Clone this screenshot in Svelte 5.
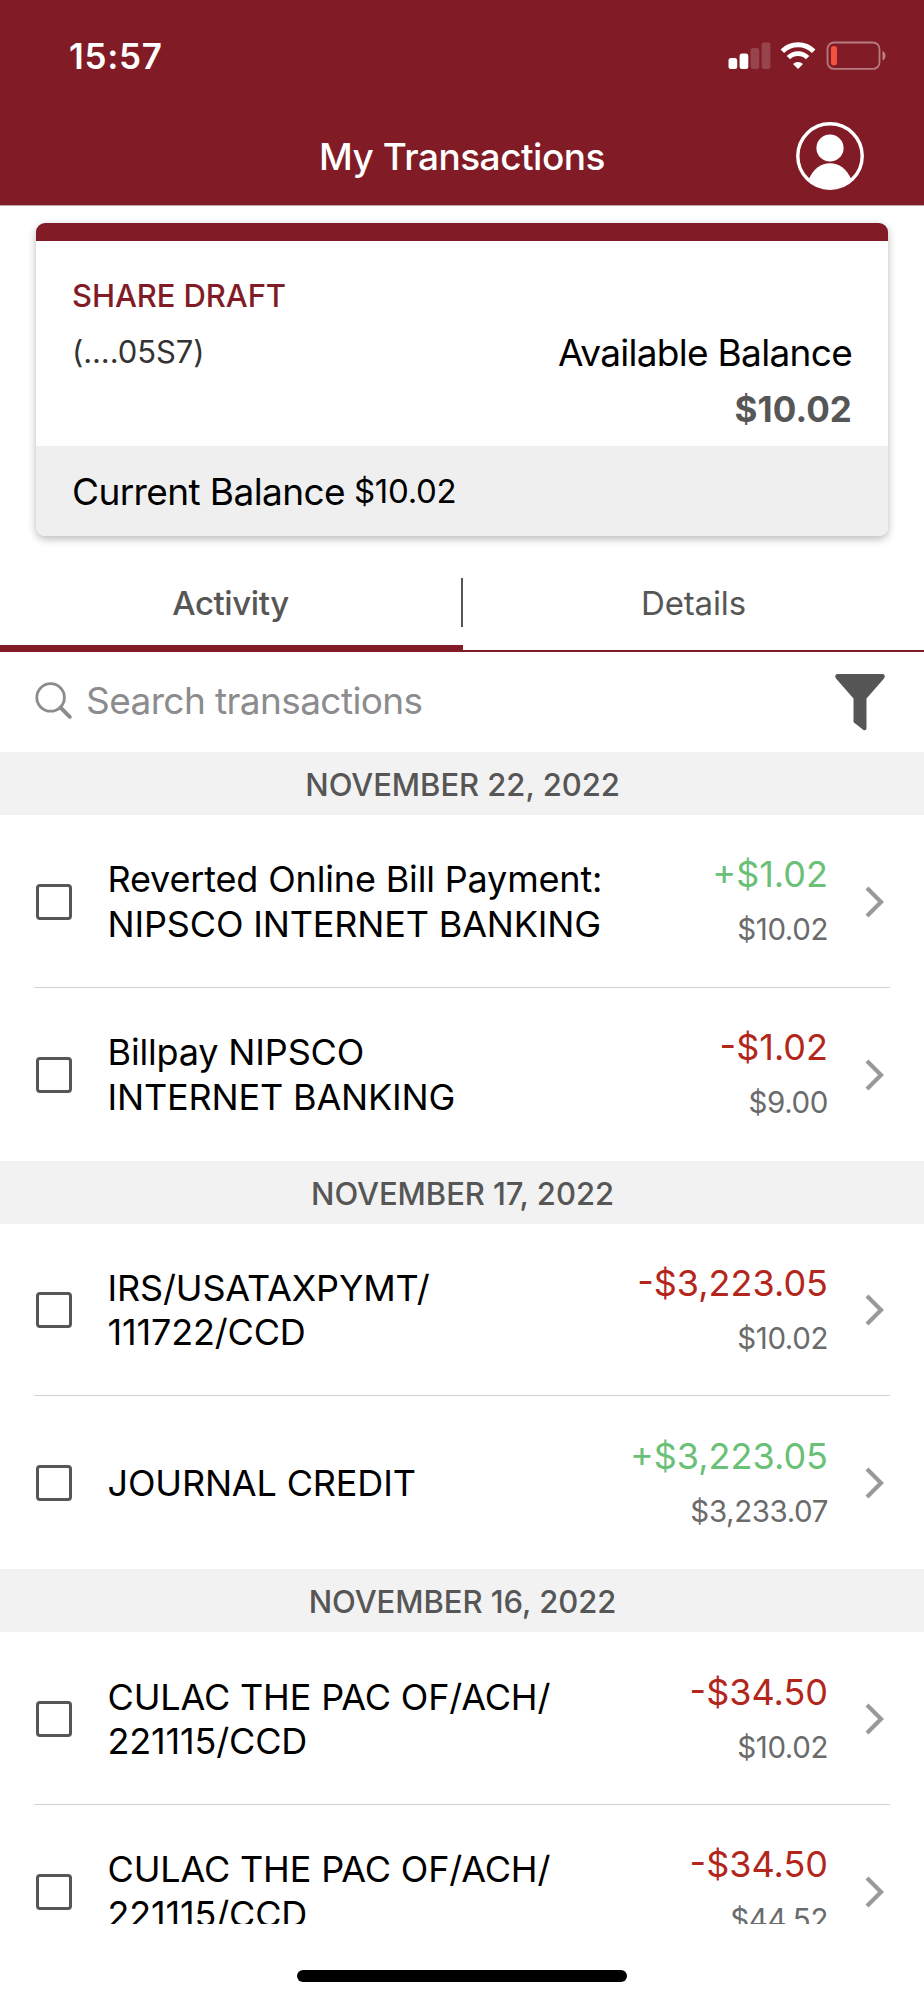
<script lang="ts">
  type Transaction = { lines: string[]; amount: string; balance: string };
  type Day = { date: string; items: Transaction[] };

  const tabs = ["Activity", "Details"];
  let activeTab = $state("Activity");

  const days: Day[] = [
    {
      date: "November 22, 2022",
      items: [
        { lines: ["Reverted Online Bill Payment:", "NIPSCO INTERNET BANKING"], amount: "+$1.02", balance: "$10.02" },
        { lines: ["Billpay NIPSCO", "INTERNET BANKING"], amount: "-$1.02", balance: "$9.00" },
      ],
    },
    {
      date: "November 17, 2022",
      items: [
        { lines: ["IRS/USATAXPYMT/", "111722/CCD"], amount: "-$3,223.05", balance: "$10.02" },
        { lines: ["JOURNAL CREDIT"], amount: "+$3,223.05", balance: "$3,233.07" },
      ],
    },
    {
      date: "November 16, 2022",
      items: [
        { lines: ["CULAC THE PAC OF/ACH/", "221115/CCD"], amount: "-$34.50", balance: "$10.02" },
        { lines: ["CULAC THE PAC OF/ACH/", "221115/CCD"], amount: "-$34.50", balance: "$44.52" },
      ],
    },
  ];
</script>

<div class="screen">
  <header>
    <div class="status-bar">
      <span class="time">15:57</span>
      <svg class="status-icons" width="160" height="30" viewBox="0 0 160 30">
        <rect x="0.5" y="17" width="8.7" height="11" rx="2.5" fill="#fff" />
        <rect x="11.6" y="12.5" width="8.7" height="15.5" rx="2.5" fill="#fff" />
        <rect x="22.6" y="7" width="8.7" height="21" rx="2.5" fill="#fff" opacity="0.18" />
        <rect x="33.7" y="1.5" width="8.7" height="26.5" rx="2.5" fill="#fff" opacity="0.18" />
        <g fill="none" stroke="#fff">
          <path d="M54.3 10.2a22.3 22.3 0 0 1 31.4 0" stroke-width="5" />
          <path d="M60.4 16.6a13.6 13.6 0 0 1 19.2 0" stroke-width="4.8" />
        </g>
        <path d="M70 28l-5-5a7.2 7.2 0 0 1 10 0z" fill="#fff" />
        <rect x="99.5" y="1.5" width="52" height="26.4" rx="6.5" fill="none" stroke="#fff" stroke-opacity="0.42" stroke-width="1.8" />
        <rect x="103" y="5" width="6" height="19.3" rx="2.6" fill="#f4503c" />
        <path d="M154.5 10c4 1.6 4 8 0 9.6z" fill="#fff" opacity="0.45" />
      </svg>
    </div>
    <div class="nav">
      <h1>My Transactions</h1>
      <button class="profile" aria-label="Profile">
        <svg width="68" height="68" viewBox="0 0 68 68">
          <circle cx="34" cy="34" r="32.2" fill="none" stroke="#fff" stroke-width="3.4" />
          <circle cx="34" cy="26" r="13.6" fill="#fff" />
          <path d="M12.8 57C17.5 47 25 41.3 34 41.3S50.5 47 55.2 57C49.5 63 42.5 66.5 34 66.5S18.5 63 12.8 57z" fill="#fff" />
        </svg>
      </button>
    </div>
  </header>

  <section class="card">
    <div class="card-body">
      <div class="account">
        <div class="account-name">SHARE DRAFT</div>
        <div class="account-number">(....05S7)</div>
      </div>
      <div class="available">
        <div class="available-label">Available Balance</div>
        <div class="available-value">$10.02</div>
      </div>
    </div>
    <div class="card-footer">
      <span class="current-label">Current Balance</span>
      <span class="current-value">$10.02</span>
    </div>
  </section>

  <nav class="tabs">
    {#each tabs as tab}
      <button class="tab" class:active={activeTab === tab} onclick={() => (activeTab = tab)}>
        <span>{tab}</span>
      </button>
    {/each}
  </nav>

  <div class="search">
    <svg class="search-icon" width="38" height="38" viewBox="0 0 38 38" fill="none" stroke="#8c8c8e">
      <circle cx="15.6" cy="15.4" r="13.8" stroke-width="2.8" />
      <path d="M25.6 25.6l9.2 9.2" stroke-width="4" stroke-linecap="round" />
    </svg>
    <span class="placeholder">Search transactions</span>
    <svg class="filter-icon" width="50" height="57" viewBox="0 0 50 57">
      <path
        d="M2 0H48Q51 1.5 49 4.5L31.5 24.5V54.5Q31 57 28.5 56L19.5 49Q18.5 48.5 18.5 47.5V24.5L1 4.5Q-1 1.5 2 0z"
        fill="#565656"
      />
    </svg>
  </div>

  <main>
    {#each days as day}
      <h2>{day.date}</h2>
      {#each day.items as item}
        <div class="row">
          <span class="checkbox"></span>
          <div class="description">
            {#each item.lines as line}
              <div>{line}</div>
            {/each}
          </div>
          <div class="amounts">
            <div class="amount" class:credit={item.amount.startsWith("+")}>{item.amount}</div>
            <div class="balance">{item.balance}</div>
          </div>
          <svg class="chevron" width="20" height="32" viewBox="0 0 20 32">
            <path d="M2 2L16 16 2 30" fill="none" stroke="#999" stroke-width="4.2" />
          </svg>
        </div>
      {/each}
    {/each}
  </main>

  <footer><div class="home-indicator"></div></footer>
</div>

<style>
  :global(body) {
    margin: 0;
    background: #fff;
  }
  .screen {
    --brand: #811c26;
    display: flex;
    flex-direction: column;
    width: 924px;
    height: 2000px;
    overflow: hidden;
    background: #fff;
    color: #000;
    font-family: Inter, "Liberation Sans", sans-serif;
  }
  button {
    padding: 0;
    border: 0;
    background: none;
    font: inherit;
    color: inherit;
  }
  header {
    flex: none;
    height: 205px;
    border-bottom: 1px solid #b9a5a7;
    background: var(--brand);
    color: #fff;
  }
  .status-bar {
    display: flex;
    justify-content: space-between;
    align-items: center;
    height: 111px;
    padding: 0 36px 0 69px;
  }
  .time {
    font-size: 35px;
    font-weight: 600;
    letter-spacing: 0.7px;
  }
  .status-icons {
    display: block;
  }
  .nav {
    display: grid;
    grid-template-columns: 1fr auto 1fr;
    align-items: center;
    height: 90px;
    padding: 0 60px;
  }
  h1 {
    grid-column: 2;
    margin: 0;
    font-size: 37px;
    font-weight: 500;
    letter-spacing: -0.5px;
  }
  .profile {
    justify-self: end;
    height: 68px;
  }
  .card {
    flex: none;
    box-sizing: border-box;
    height: 313px;
    margin: 17px 36px 0;
    border-top: 18px solid var(--brand);
    border-radius: 9px;
    box-shadow: 0 3px 8px rgba(0, 0, 0, 0.28);
    overflow: hidden;
  }
  .card-body {
    display: flex;
    justify-content: space-between;
    align-items: flex-end;
    box-sizing: border-box;
    height: 205px;
    padding: 0 36px 8px;
  }
  .account {
    align-self: flex-start;
    padding-top: 27px;
    font-size: 31px;
    line-height: 56px;
    letter-spacing: -0.1px;
  }
  .account-name {
    color: var(--brand);
    font-weight: 500;
  }
  .account-number {
    color: #333;
  }
  .available {
    text-align: right;
    line-height: 57px;
  }
  .available-label {
    font-size: 37px;
    letter-spacing: -0.7px;
  }
  .available-value {
    color: #565656;
    font-size: 35px;
    font-weight: 700;
    letter-spacing: 0.1px;
  }
  .card-footer {
    display: flex;
    align-items: center;
    gap: 9px;
    height: 90px;
    padding: 0 36px;
    background: #efefef;
  }
  .current-label {
    font-size: 37px;
    letter-spacing: -0.6px;
  }
  .current-value {
    font-size: 33px;
    letter-spacing: -0.3px;
  }
  .tabs {
    flex: none;
    display: flex;
    height: 116px;
  }
  .tab {
    position: relative;
    flex: 1;
    padding-top: 20px;
    border-bottom: 2px solid var(--brand);
    color: #565656;
    font-size: 33px;
    letter-spacing: -0.15px;
  }
  .tab.active {
    padding-top: 25px;
    padding-right: 2px;
    border-bottom-width: 7px;
    font-weight: 500;
    letter-spacing: -0.4px;
  }
  .tab:first-child::after {
    content: "";
    position: absolute;
    top: 42px;
    right: 0;
    width: 2px;
    height: 49px;
    background: #565656;
  }
  .search {
    flex: none;
    display: flex;
    align-items: center;
    height: 100px;
    padding: 0 39px 0 35px;
  }
  .search-icon,
  .placeholder {
    margin-bottom: 3px;
  }
  .placeholder {
    flex: 1;
    margin-left: 13px;
    color: #8c8c8e;
    font-size: 37px;
    letter-spacing: -0.6px;
  }
  main {
    flex: 1;
    min-height: 0;
    overflow: hidden;
  }
  h2 {
    height: 63px;
    margin: 0;
    background: #f2f2f2;
    color: #565656;
    font-size: 31px;
    font-weight: 500;
    line-height: 65px;
    letter-spacing: -0.05px;
    text-indent: 1px;
    text-align: center;
    text-transform: uppercase;
  }
  .row {
    display: flex;
    align-items: center;
    box-sizing: border-box;
    height: 171.8px;
    margin: 0 34px;
    padding: 2px 5px 0 2px;
  }
  .row + .row {
    height: 173.8px;
    padding-top: 1px;
    border-top: 1px solid #d2d2d2;
  }
  .checkbox {
    box-sizing: border-box;
    width: 36px;
    height: 36px;
    border: 3px solid #565656;
    border-radius: 4px;
  }
  .description {
    flex: 1;
    margin-left: 35.5px;
    font-size: 36px;
    line-height: 44.5px;
    white-space: nowrap;
    letter-spacing: -0.16px;
  }
  .amounts {
    padding-top: 1px;
    text-align: right;
  }
  .amount {
    color: #b3261b;
    font-size: 36px;
    line-height: 55px;
  }
  .amount.credit {
    color: #6bc077;
  }
  .balance {
    color: #6b6b6b;
    font-size: 29.5px;
    line-height: 55px;
    letter-spacing: -0.4px;
  }
  .chevron {
    margin-left: 37px;
  }
  footer {
    flex: none;
    display: flex;
    justify-content: center;
    height: 76px;
  }
  .home-indicator {
    width: 330px;
    height: 12px;
    margin-top: 46px;
    border-radius: 6px;
    background: #000;
  }
</style>
